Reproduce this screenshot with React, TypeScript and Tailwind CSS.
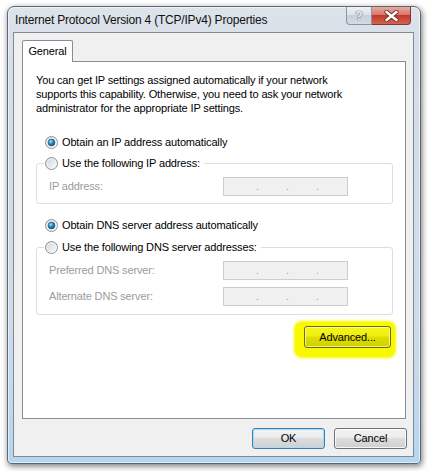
import React from 'react';

function Radio({ checked = false }: { checked?: boolean }) {
    return (
        <svg width="13" height="13" viewBox="0 0 13 13" className="shrink-0">
            <defs>
                <linearGradient id="rbg" x1="0" y1="0" x2="1" y2="1">
                    <stop offset="0" stopColor="#cfd1d3" />
                    <stop offset="1" stopColor="#ffffff" />
                </linearGradient>
                <radialGradient id="rdot" cx="0.38" cy="0.34" r="0.75">
                    <stop offset="0" stopColor="#a6e0fb" />
                    <stop offset="0.45" stopColor="#2e8fcc" />
                    <stop offset="1" stopColor="#0c3a60" />
                </radialGradient>
            </defs>
            <circle cx="6.5" cy="6.5" r="6" fill="url(#rbg)" stroke="#8e9195" />
            <circle cx="6.5" cy="6.5" r="4.6" fill="none" stroke="#f4f4f4" strokeWidth="0.8" />
            {checked && (
                <circle cx="6.5" cy="6.5" r="3.4" fill="url(#rdot)" stroke="#1b4d75" strokeWidth="0.6" />
            )}
        </svg>
    );
}

function IpBox() {
    return (
        <div className="flex h-[19px] w-[125px] shrink-0 border border-[#cacdd1] bg-[#f0f0f0] pl-[32px] leading-[17px] text-[#a3a3a3]">
            <span className="w-[30px]">.</span>
            <span className="w-[30px]">.</span>
            <span className="w-[30px]">.</span>
        </div>
    );
}

function Field({ label }: { label: string }) {
    return (
        <div className="flex items-center">
            <span className="w-[174px] text-[#9b9b9b]">{label}</span>
            <IpBox />
        </div>
    );
}

export default function App() {
    return (
        <div className="h-[471px] w-[428px] bg-white pl-[7px] pt-[6px] font-['Liberation_Sans',Arial,sans-serif] text-[11px] tracking-[-0.15px] text-black">
            <div className="flex h-[458px] w-[414px] flex-col rounded-t-[7px] rounded-b-[4px] border border-[#5e6873] bg-[linear-gradient(180deg,#dde3ea_0%,#d6dee8_10%,#cddbea_70%,#b5d6ef_100%)] shadow-[1px_2px_6px_rgba(0,0,0,0.55),inset_0_0_0_1px_rgba(255,255,255,0.55)]">
                {/* title bar */}
                <div className="flex h-[25px] shrink-0 items-center pl-[7px]">
                    <span className="grow text-[12px] tracking-[-0.2px] text-[#111]">
                        Internet Protocol Version 4 (TCP/IPv4) Properties
                    </span>
                    <div className="mr-[9px] flex self-start">
                        <div className="flex h-[18px] w-[26px] items-center justify-center rounded-bl-[4px] border border-t-0 border-[#8a95a2] bg-[linear-gradient(180deg,#eef1f4_0%,#dde3ea_45%,#c7d0da_50%,#d4dce5_100%)] text-[13px] font-bold text-[#eef2f6] [text-shadow:0_0_1px_#4a5560,0_0_1px_#4a5560]">
                            ?
                        </div>
                        <div className="flex h-[18px] w-[39px] items-center justify-center rounded-br-[4px] border border-l-0 border-t-0 border-[#7a3a33] bg-[linear-gradient(180deg,#e9aaa1_0%,#d9786b_45%,#c2392c_50%,#d8634f_100%)]">
                            <svg width="15" height="12" viewBox="0 0 15 12">
                                <path d="M2.5 2 L12.5 10 M12.5 2 L2.5 10" stroke="#6b2a24" strokeWidth="4.2" strokeLinecap="round" />
                                <path d="M2.5 2 L12.5 10 M12.5 2 L2.5 10" stroke="#ffffff" strokeWidth="2.6" strokeLinecap="round" />
                            </svg>
                        </div>
                    </div>
                </div>

                {/* client area */}
                <div className="ml-[5px] flex h-[425px] w-[401px] flex-col border border-[#7f8994] bg-[#f0f0f0] pl-[8px] pt-[7px]">
                    <div className="relative z-10 -mb-px flex h-[22px] w-[51px] items-center justify-center rounded-t-[2px] border border-b-0 border-[#898c95] bg-white">
                        General
                    </div>
                    <div className="flex h-[358px] w-[384px] flex-col border border-[#898c95] bg-white pl-[13px] pr-[12px] pt-[11px]">
                        <p className="leading-[14px]">
                            You can get IP settings assigned automatically if your network
                            <br />
                            supports this capability. Otherwise, you need to ask your network
                            <br />
                            administrator for the appropriate IP settings.
                        </p>

                        <div className="ml-[9px] mt-[20px] flex h-[14px] items-center gap-[4px]">
                            <Radio checked />
                            <span>Obtain an IP address automatically</span>
                        </div>

                        <fieldset className="mt-[7px] rounded-[3px] border border-[#d5dfe5] pb-[7px]">
                            <legend className="ml-[7px] flex h-[14px] items-center gap-[4px] pl-[1px] pr-[4px]">
                                <Radio />
                                <span>Use the following IP address:</span>
                            </legend>
                            <div className="pl-[12px] pt-[7px]">
                                <Field label="IP address:" />
                            </div>
                        </fieldset>

                        <div className="ml-[9px] mt-[14px] flex h-[14px] items-center gap-[4px]">
                            <Radio checked />
                            <span>Obtain DNS server address automatically</span>
                        </div>

                        <fieldset className="mt-[8px] rounded-[3px] border border-[#d5dfe5] pb-[8px]">
                            <legend className="ml-[7px] flex h-[14px] items-center gap-[4px] pl-[1px] pr-[4px]">
                                <Radio />
                                <span>Use the following DNS server addresses:</span>
                            </legend>
                            <div className="flex flex-col gap-[7px] pl-[12px] pt-[7px]">
                                <Field label="Preferred DNS server:" />
                                <Field label="Alternate DNS server:" />
                            </div>
                        </fieldset>

                        <div className="-mr-[2px] mt-[7px] flex justify-end">
                            <div className="rounded-[7px] bg-[#f8f800] pb-[9px] pl-[9px] pr-[4px] pt-[4px] shadow-[0_0_3px_1px_#f8f800]">
                                <button className="h-[22px] w-[87px] rounded-[3px] border border-[#6b6b12] bg-[linear-gradient(180deg,#f6f61e_0%,#eeee0e_45%,#dede00_50%,#d0d000_100%)] text-[11px] shadow-[inset_0_0_0_1px_rgba(255,255,180,0.7)]">
                                    Advanced...
                                </button>
                            </div>
                        </div>
                    </div>

                    <div className="mr-[6px] mt-[9px] flex justify-end gap-[9px]">
                        <button className="h-[21px] w-[73px] rounded-[3px] border border-[#3c7fb1] bg-[linear-gradient(180deg,#f3f3f3_0%,#ebebeb_45%,#dddddd_50%,#cfcfcf_100%)] text-[11px] shadow-[inset_0_0_0_1px_#a9dcf4]">
                            OK
                        </button>
                        <button className="h-[21px] w-[73px] rounded-[3px] border border-[#707070] bg-[linear-gradient(180deg,#f3f3f3_0%,#ebebeb_45%,#dddddd_50%,#cfcfcf_100%)] text-[11px] shadow-[inset_0_0_0_1px_rgba(255,255,255,0.8)]">
                            Cancel
                        </button>
                    </div>
                </div>
            </div>
        </div>
    );
}
